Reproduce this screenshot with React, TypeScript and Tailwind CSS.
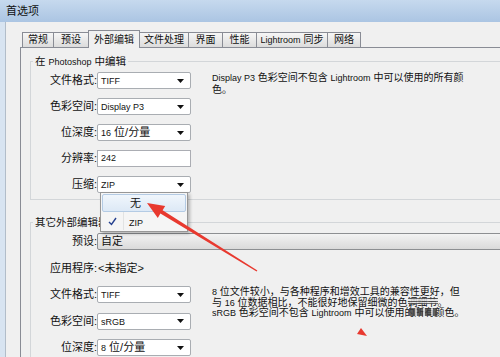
import React from "react";

const L = ({ children }: { children: React.ReactNode }) => (
  <span className="text-[9px]">{children}</span>
);

function Caret() {
  return (
    <svg width="7" height="4" viewBox="0 0 7 4" className="shrink-0">
      <path d="M0 0H7L3.5 4Z" fill="#111" />
    </svg>
  );
}

function Select({ children }: { children: React.ReactNode }) {
  return (
    <div className="w-[94px] h-[17px] shrink-0 bg-white border border-[#a9adb2] rounded-[2px] flex items-center justify-between pl-[3px] pr-[6px] text-[11px] leading-none">
      <span className="whitespace-nowrap">{children}</span>
      <Caret />
    </div>
  );
}

function Row({ label, children }: { label: string; children: React.ReactNode }) {
  return (
    <div className="flex items-center h-[17px]">
      <div className="w-[66px] shrink-0 text-right text-[11px] leading-none whitespace-nowrap">{label}</div>
      {children}
    </div>
  );
}

function Tab({ label, active, w }: { label: React.ReactNode; active?: boolean; w: string }) {
  if (active) {
    return (
      <div className={`${w} shrink-0 h-[18px] -mb-px -ml-px relative z-10 bg-[#f0f0f0] border-t border-l border-r border-[#898c95] flex items-center justify-center text-[10px] leading-none whitespace-nowrap`}>
        {label}
      </div>
    );
  }
  return (
    <div className={`${w} shrink-0 h-[15px] -ml-px bg-linear-to-b from-[#f6f6f6] to-[#dcdcdc] border-t border-l border-r border-[#898c95] flex items-center justify-center text-[10px] leading-none whitespace-nowrap`}>
      {label}
    </div>
  );
}

export default function App() {
  return (
    <div className="w-[500px] h-[357px] overflow-hidden relative bg-[#f0f0f0] text-[#111] font-['Liberation_Sans','Noto_Sans_CJK_SC',sans-serif]">
      {/* title bar */}
      <div className="h-[22px] bg-linear-to-b from-[#c6d9ee] to-[#abc5e3] flex items-center pl-[6px] text-[11px] leading-none">
        首选项
      </div>
      <div className="flex h-[335px]">
        <div className="w-[6px] shrink-0 bg-[#d8e4f1] border-r border-[#b2bdc9]" />
        <div className="flex-1 min-w-0 pl-[14px] pt-[8px] flex flex-col">
          {/* tabs */}
          <div className="flex items-end h-[17px] pl-[3px]">
            <Tab w="w-[32px]" label="常规" />
            <Tab w="w-[36px]" label="预设" />
            <Tab w="w-[52px]" label="外部编辑" active />
            <Tab w="w-[50px]" label="文件处理" />
            <Tab w="w-[35px]" label="界面" />
            <Tab w="w-[35px]" label="性能" />
            <Tab w="w-[72px]" label={<><L>Lightroom</L>&nbsp;同步</>} />
            <Tab w="w-[34px]" label="网络" />
          </div>
          {/* panel */}
          <div className="flex-1 border-t border-l border-[#898c95] bg-[#f0f0f0] pl-[9px] pt-[6px]">
            {/* group 1 */}
            <fieldset className="w-[560px] border border-[#d3d6d9] pb-[6px]">
              <legend className="ml-[2px] px-[2px] text-[10.5px] leading-[14px] whitespace-nowrap">
                在 <L>Photoshop</L> 中编辑
              </legend>
              <div className="flex pt-[3px]">
                <div className="flex flex-col gap-[9px]">
                  <Row label="文件格式:">
                    <Select><L>TIFF</L></Select>
                  </Row>
                  <Row label="色彩空间:">
                    <Select><L>Display P3</L></Select>
                  </Row>
                  <Row label="位深度:">
                    <Select><L>16</L> 位/分量</Select>
                  </Row>
                  <Row label="分辨率:">
                    <div className="w-[94px] h-[17px] bg-white border border-[#abadb3] flex items-center pl-[3px] leading-none">
                      <L>242</L>
                    </div>
                  </Row>
                  <Row label="压缩:">
                    <div className="relative">
                      <Select><L>ZIP</L></Select>
                      {/* open menu */}
                      <div className="absolute left-[3px] top-[16px] z-20 w-[88px] h-[40px] bg-[#f5f5f5] border border-[#979797] shadow-[2px_2px_3px_rgba(0,0,0,0.25)] p-px flex flex-col">
                        <div className="relative h-[18px] flex items-center rounded-[2px] border border-[#b4cbe4] bg-linear-to-b from-[#f0f6fc] to-[#dde9f6]">
                          <span className="pl-[27px] text-[11px] leading-none">无</span>
                        </div>
                        <div className="h-[18px] flex items-center">
                          <div className="w-[22px] h-full flex items-center justify-center border-r border-[#e2e3e3]">
                            <svg width="9" height="9" viewBox="0 0 9 9">
                              <path d="M1 5L3.5 7.5L8 1" stroke="#25408f" strokeWidth="1.4" fill="none" />
                            </svg>
                          </div>
                          <span className="pl-[5px] leading-none"><L>ZIP</L></span>
                        </div>
                      </div>
                    </div>
                  </Row>
                </div>
                <div className="ml-[21px] text-[10px] leading-[12px] whitespace-nowrap">
                  <L>Display P3</L> 色彩空间不包含 <L>Lightroom</L> 中可以使用的所有颜
                  <br />
                  色。
                </div>
              </div>
            </fieldset>
            {/* group 2 */}
            <fieldset className="w-[560px] mt-[15px] border border-[#d3d6d9] pb-[6px]">
              <legend className="ml-[2px] px-[2px] text-[10.5px] leading-[14px] whitespace-nowrap">
                其它外部编辑器
              </legend>
              <div className="flex flex-col gap-[9.5px] pt-[4px]">
                <Row label="预设:">
                  <div className="w-[440px] h-[17px] rounded-[2px] border border-[#8d8f92] bg-linear-to-b from-[#f3f3f3] to-[#dadada] flex items-center pl-[3px] text-[11px] leading-none">
                    自定
                  </div>
                </Row>
                <Row label="应用程序:">
                  <span className="text-[11px] leading-none pl-px">&lt;未指定&gt;</span>
                </Row>
                <div className="flex">
                  <div className="flex flex-col gap-[9.5px]">
                    <Row label="文件格式:">
                      <Select><L>TIFF</L></Select>
                    </Row>
                    <Row label="色彩空间:">
                      <Select><L>sRGB</L></Select>
                    </Row>
                    <Row label="位深度:">
                      <Select><L>8</L> 位/分量</Select>
                    </Row>
                  </div>
                  <div className="ml-[21px] mt-px text-[10px] leading-[10.5px] whitespace-nowrap">
                    <L>8</L> 位文件较小，与各种程序和增效工具的兼容性更好，但
                    <br />
                    与 <L>16</L> 位数据相比，不能很好地保留细微的色调细节。
                    <br />
                    <L>sRGB</L> 色彩空间不包含 <L>Lightroom</L> 中可以使用的所有颜色。
                  </div>
                </div>
              </div>
            </fieldset>
          </div>
        </div>
      </div>
      {/* watermark smudges over the text */}
      <div className="absolute left-[408px] top-[298px] w-[30px] h-[6px] z-20 opacity-80 bg-[repeating-linear-gradient(180deg,#4d4d4d_0px,#4d4d4d_1px,#e6e6e6_1px,#e6e6e6_2.5px)]" />
      <div className="absolute left-[409px] top-[308px] w-[28px] h-[8px] z-20 opacity-80 bg-[repeating-linear-gradient(90deg,#3f3f3f_0px,#3f3f3f_6px,#cfcfcf_6px,#cfcfcf_8px)]" />
      {/* annotation arrow */}
      <svg className="absolute left-0 top-0 pointer-events-none z-30" width="500" height="357" viewBox="0 0 500 357">
        <polygon
          points="147,203 165.2,205.9 162.6,210.2 257.4,270.6 256.6,271.6 160.4,213.6 157.8,217.9"
          fill="#e8392f"
        />
        <polygon points="361,328 367,336 357,334" fill="#e8392f" />
      </svg>
    </div>
  );
}
